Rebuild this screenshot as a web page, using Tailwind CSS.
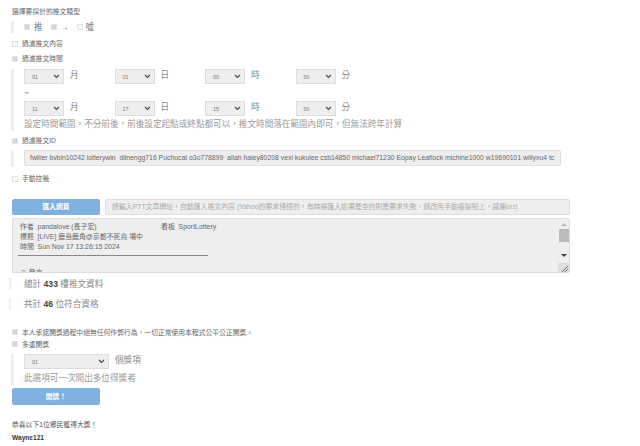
<!DOCTYPE html>
<html lang="zh-Hant">
<head>
    <meta charset="UTF-8">
    <title>抽獎</title>
    <script src="https://cdn.jsdelivr.net/npm/@tailwindcss/browser@4"></script>
</head>
<body class="bg-white font-['Liberation_Sans','Noto_Sans_CJK_TC',sans-serif] text-[#666] text-[6.8px] leading-[11px] overflow-hidden">
<div class="w-[640px] h-[446px] overflow-hidden pl-[12px] pt-[6px]">

    <div class="h-[11px]">選擇要採計的推文類型</div>

    <!-- 推文類型 -->
    <div class="mt-[4px] ml-[-1px] h-[12px] border-l-[3px] border-[#eee] pl-[10px] flex items-center text-[8.6px] text-[#777]">
        <span class="w-[6px] h-[6px] bg-[#d4d4d4] border border-[#e2e2e2]"></span>
        <span class="ml-[4px]">推</span>
        <span class="ml-[8px] w-[6px] h-[6px] bg-[#d4d4d4] border border-[#e2e2e2]"></span>
        <span class="ml-[3px] w-[10px] text-center">→</span>
        <span class="ml-[7px] w-[6px] h-[6px] bg-[#fafafa] border border-[#e2e2e2]"></span>
        <span class="ml-[3px]">噓</span>
    </div>

    <div class="mt-[3px] h-[15px] flex items-center">
        <span class="w-[6px] h-[6px] bg-[#fafafa] border border-[#e2e2e2]"></span>
        <span class="ml-[4px]">過濾推文內容</span>
    </div>
    <div class="h-[15px] flex items-center">
        <span class="w-[6px] h-[6px] bg-[#d4d4d4] border border-[#e2e2e2]"></span>
        <span class="ml-[4px]">過濾推文時間</span>
    </div>

    <!-- 時間範圍 -->
    <div class="mt-[3px] ml-[-1px] w-[560px] h-[62px] border-l-[3px] border-[#eee] pl-[10px] text-[8.6px] leading-[12px] text-[#888]">
        <div class="grid grid-cols-[90.5px_90.5px_90.5px_60px] h-[16px]">
            <div class="flex"><span class="w-[40px] h-[15px] bg-[#eee] border border-[#ddd] text-[5.5px] text-[#777] flex items-center justify-between pl-[7px] pr-[3px]">01<svg width="7" height="5" viewBox="0 0 7 5"><path d="M1 1l2.5 2.5L6 1" fill="none" stroke="#444" stroke-width="1.1"/></svg></span><span class="ml-[6px]">月</span></div>
            <div class="flex"><span class="w-[40px] h-[15px] bg-[#eee] border border-[#ddd] text-[5.5px] text-[#777] flex items-center justify-between pl-[7px] pr-[3px]">01<svg width="7" height="5" viewBox="0 0 7 5"><path d="M1 1l2.5 2.5L6 1" fill="none" stroke="#444" stroke-width="1.1"/></svg></span><span class="ml-[6px]">日</span></div>
            <div class="flex"><span class="w-[40px] h-[15px] bg-[#eee] border border-[#ddd] text-[5.5px] text-[#777] flex items-center justify-between pl-[7px] pr-[3px]">00<svg width="7" height="5" viewBox="0 0 7 5"><path d="M1 1l2.5 2.5L6 1" fill="none" stroke="#444" stroke-width="1.1"/></svg></span><span class="ml-[6px]">時</span></div>
            <div class="flex"><span class="w-[40px] h-[15px] bg-[#eee] border border-[#ddd] text-[5.5px] text-[#777] flex items-center justify-between pl-[7px] pr-[3px]">00<svg width="7" height="5" viewBox="0 0 7 5"><path d="M1 1l2.5 2.5L6 1" fill="none" stroke="#444" stroke-width="1.1"/></svg></span><span class="ml-[6px]">分</span></div>
        </div>
        <div class="h-[16px] leading-[16px]">~</div>
        <div class="grid grid-cols-[90.5px_90.5px_90.5px_60px] h-[16px]">
            <div class="flex"><span class="w-[40px] h-[15px] bg-[#eee] border border-[#ddd] text-[5.5px] text-[#777] flex items-center justify-between pl-[7px] pr-[3px]">11<svg width="7" height="5" viewBox="0 0 7 5"><path d="M1 1l2.5 2.5L6 1" fill="none" stroke="#444" stroke-width="1.1"/></svg></span><span class="ml-[6px]">月</span></div>
            <div class="flex"><span class="w-[40px] h-[15px] bg-[#eee] border border-[#ddd] text-[5.5px] text-[#777] flex items-center justify-between pl-[7px] pr-[3px]">17<svg width="7" height="5" viewBox="0 0 7 5"><path d="M1 1l2.5 2.5L6 1" fill="none" stroke="#444" stroke-width="1.1"/></svg></span><span class="ml-[6px]">日</span></div>
            <div class="flex"><span class="w-[40px] h-[15px] bg-[#eee] border border-[#ddd] text-[5.5px] text-[#777] flex items-center justify-between pl-[7px] pr-[3px]">15<svg width="7" height="5" viewBox="0 0 7 5"><path d="M1 1l2.5 2.5L6 1" fill="none" stroke="#444" stroke-width="1.1"/></svg></span><span class="ml-[6px]">時</span></div>
            <div class="flex"><span class="w-[40px] h-[15px] bg-[#eee] border border-[#ddd] text-[5.5px] text-[#777] flex items-center justify-between pl-[7px] pr-[3px]">00<svg width="7" height="5" viewBox="0 0 7 5"><path d="M1 1l2.5 2.5L6 1" fill="none" stroke="#444" stroke-width="1.1"/></svg></span><span class="ml-[6px]">分</span></div>
        </div>
        <div class="mt-[1px] whitespace-nowrap leading-[13px] text-[#999]">設定時間範圍，不分前後，前後設定起點或終點都可以，推文時間落在範圍內即可，但無法跨年計算</div>
    </div>

    <div class="mt-[2px] h-[15px] flex items-center">
        <span class="w-[6px] h-[6px] bg-[#d4d4d4] border border-[#e2e2e2]"></span>
        <span class="ml-[4px]">過濾推文ID</span>
    </div>

    <!-- 推文ID -->
    <div class="mt-[2px] ml-[-1px] h-[17px] border-l-[3px] border-[#eee] pl-[10px]">
        <div class="w-[537px] h-[16px] bg-[#eee] border border-[#ddd] rounded-[2px] pl-[5px] overflow-hidden whitespace-nowrap text-[6.85px] leading-[14px]">fwiller bvbin10242 lotterywin&nbsp; diinengg716 Puchucat o3o778899&nbsp; allah haley80208 vexl kukulee csb14850 michael71230 Eopay Leaflock michine1000 w19690101 willyxu4 tc</div>
    </div>

    <div class="mt-[4px] h-[15px] flex items-center">
        <span class="w-[6px] h-[6px] bg-[#fafafa] border border-[#e2e2e2]"></span>
        <span class="ml-[4px]">手動控籤</span>
    </div>

    <!-- 匯入網頁 -->
    <div class="mt-[13px] flex">
        <div class="w-[88px] h-[16px] bg-[#7fb0de] rounded-[2px] text-white text-center leading-[16px] font-bold">匯入網頁</div>
        <div class="ml-[5px] w-[465px] h-[16px] bg-[#eee] border border-[#ddd] rounded-[2px] pl-[6px] text-[6.88px] leading-[14px] text-[#aaa] whitespace-nowrap overflow-hidden">請輸入PTT文章網址，自動匯入推文內容 (Yahoo的要求怪怪的，有時候匯入如果是空的則是要求失敗，請改用手動複製貼上，感謝orz)</div>
    </div>
    <div class="relative mt-[3px] w-[558px] h-[55px] bg-[#eee] border border-[#ddd] rounded-[2px] overflow-hidden pt-[3px] pl-[7px] text-[6.9px] leading-[10px]">
        <div class="flex"><span class="w-[141px]">作者&nbsp; pandalove (長子宏)</span><span>看板&nbsp; SportLottery</span></div>
        <div>標題&nbsp; [LIVE] 鹿島鹿角@京都不死鳥 場中</div>
        <div>時間&nbsp; Sun Nov 17 13:26:15 2024</div>
        <div class="mt-[3px] ml-[-2px] w-[190px] h-px bg-[#888]"></div>
        <div class="mt-[12px]">※ 發言</div>
        <!-- 捲軸 -->
        <div class="absolute right-0 top-0 bottom-0 w-[11px] bg-[#eee] flex flex-col items-center">
            <span class="mt-[4px] w-0 h-0 border-x-[3px] border-x-transparent border-b-[3px] border-b-[#bbb]"></span>
            <span class="mt-[3px] w-[10px] h-[13px] bg-[#bbb]"></span>
            <span class="mt-[12px] w-0 h-0 border-x-[3px] border-x-transparent border-t-[3px] border-t-[#444]"></span>
            <span class="mt-[6px] flex-1 w-full bg-[#ddd] flex items-end justify-end">
                <svg width="9" height="9" viewBox="0 0 9 9"><path d="M2 9l6-6M5 9l3-3" stroke="#555" stroke-width="0.8"/></svg>
            </span>
        </div>
    </div>

    <!-- 統計 -->
    <div class="mt-[5px] ml-[-3px] h-[12px] border-l-[2px] border-[#eee] pl-[13px] text-[8.6px] leading-[12px] text-[#888]">總計 <b class="text-[#444]">433</b> 樓推文資料</div>
    <div class="mt-[8px] ml-[-3px] h-[12px] border-l-[2px] border-[#eee] pl-[13px] text-[8.6px] leading-[12px] text-[#888]">共計 <b class="text-[#444]">46</b> 位符合資格</div>

    <div class="mt-[16px] h-[12px] flex items-center">
        <span class="w-[6px] h-[6px] bg-[#d4d4d4] border border-[#e2e2e2]"></span>
        <span class="ml-[4px]">本人承諾開獎過程中絕無任何作弊行為，一切正常使用本程式公平公正開獎。</span>
    </div>
    <div class="h-[12px] flex items-center">
        <span class="w-[6px] h-[6px] bg-[#d4d4d4] border border-[#e2e2e2]"></span>
        <span class="ml-[4px]">多重開獎</span>
    </div>

    <!-- 多重開獎 -->
    <div class="mt-[4px] ml-[-1px] h-[31px] border-l-[3px] border-[#eee] pl-[10px] text-[8.6px] leading-[12px] text-[#888]">
        <div class="flex h-[16px]">
            <span class="w-[85px] h-[15px] bg-[#eee] border border-[#ddd] text-[5.5px] text-[#777] flex items-center justify-between pl-[7px] pr-[3px]">01<svg width="7" height="5" viewBox="0 0 7 5"><path d="M1 1l2.5 2.5L6 1" fill="none" stroke="#444" stroke-width="1.1"/></svg></span>
            <span class="ml-[6px]">個獎項</span>
        </div>
        <div class="mt-[2px] text-[#999]">此選項可一次開出多位得獎者</div>
    </div>

    <div class="mt-[3px] w-[88px] h-[17px] bg-[#7fb0de] rounded-[2px] text-white text-center leading-[17px] font-bold">開獎！</div>

    <div class="mt-[14px] text-[#555]">恭喜以下1位鄉民獲得大獎！</div>
    <div class="mt-[2px] font-bold text-[#333] text-[6.6px]">Wayne121</div>
</div>
</body>
</html>
